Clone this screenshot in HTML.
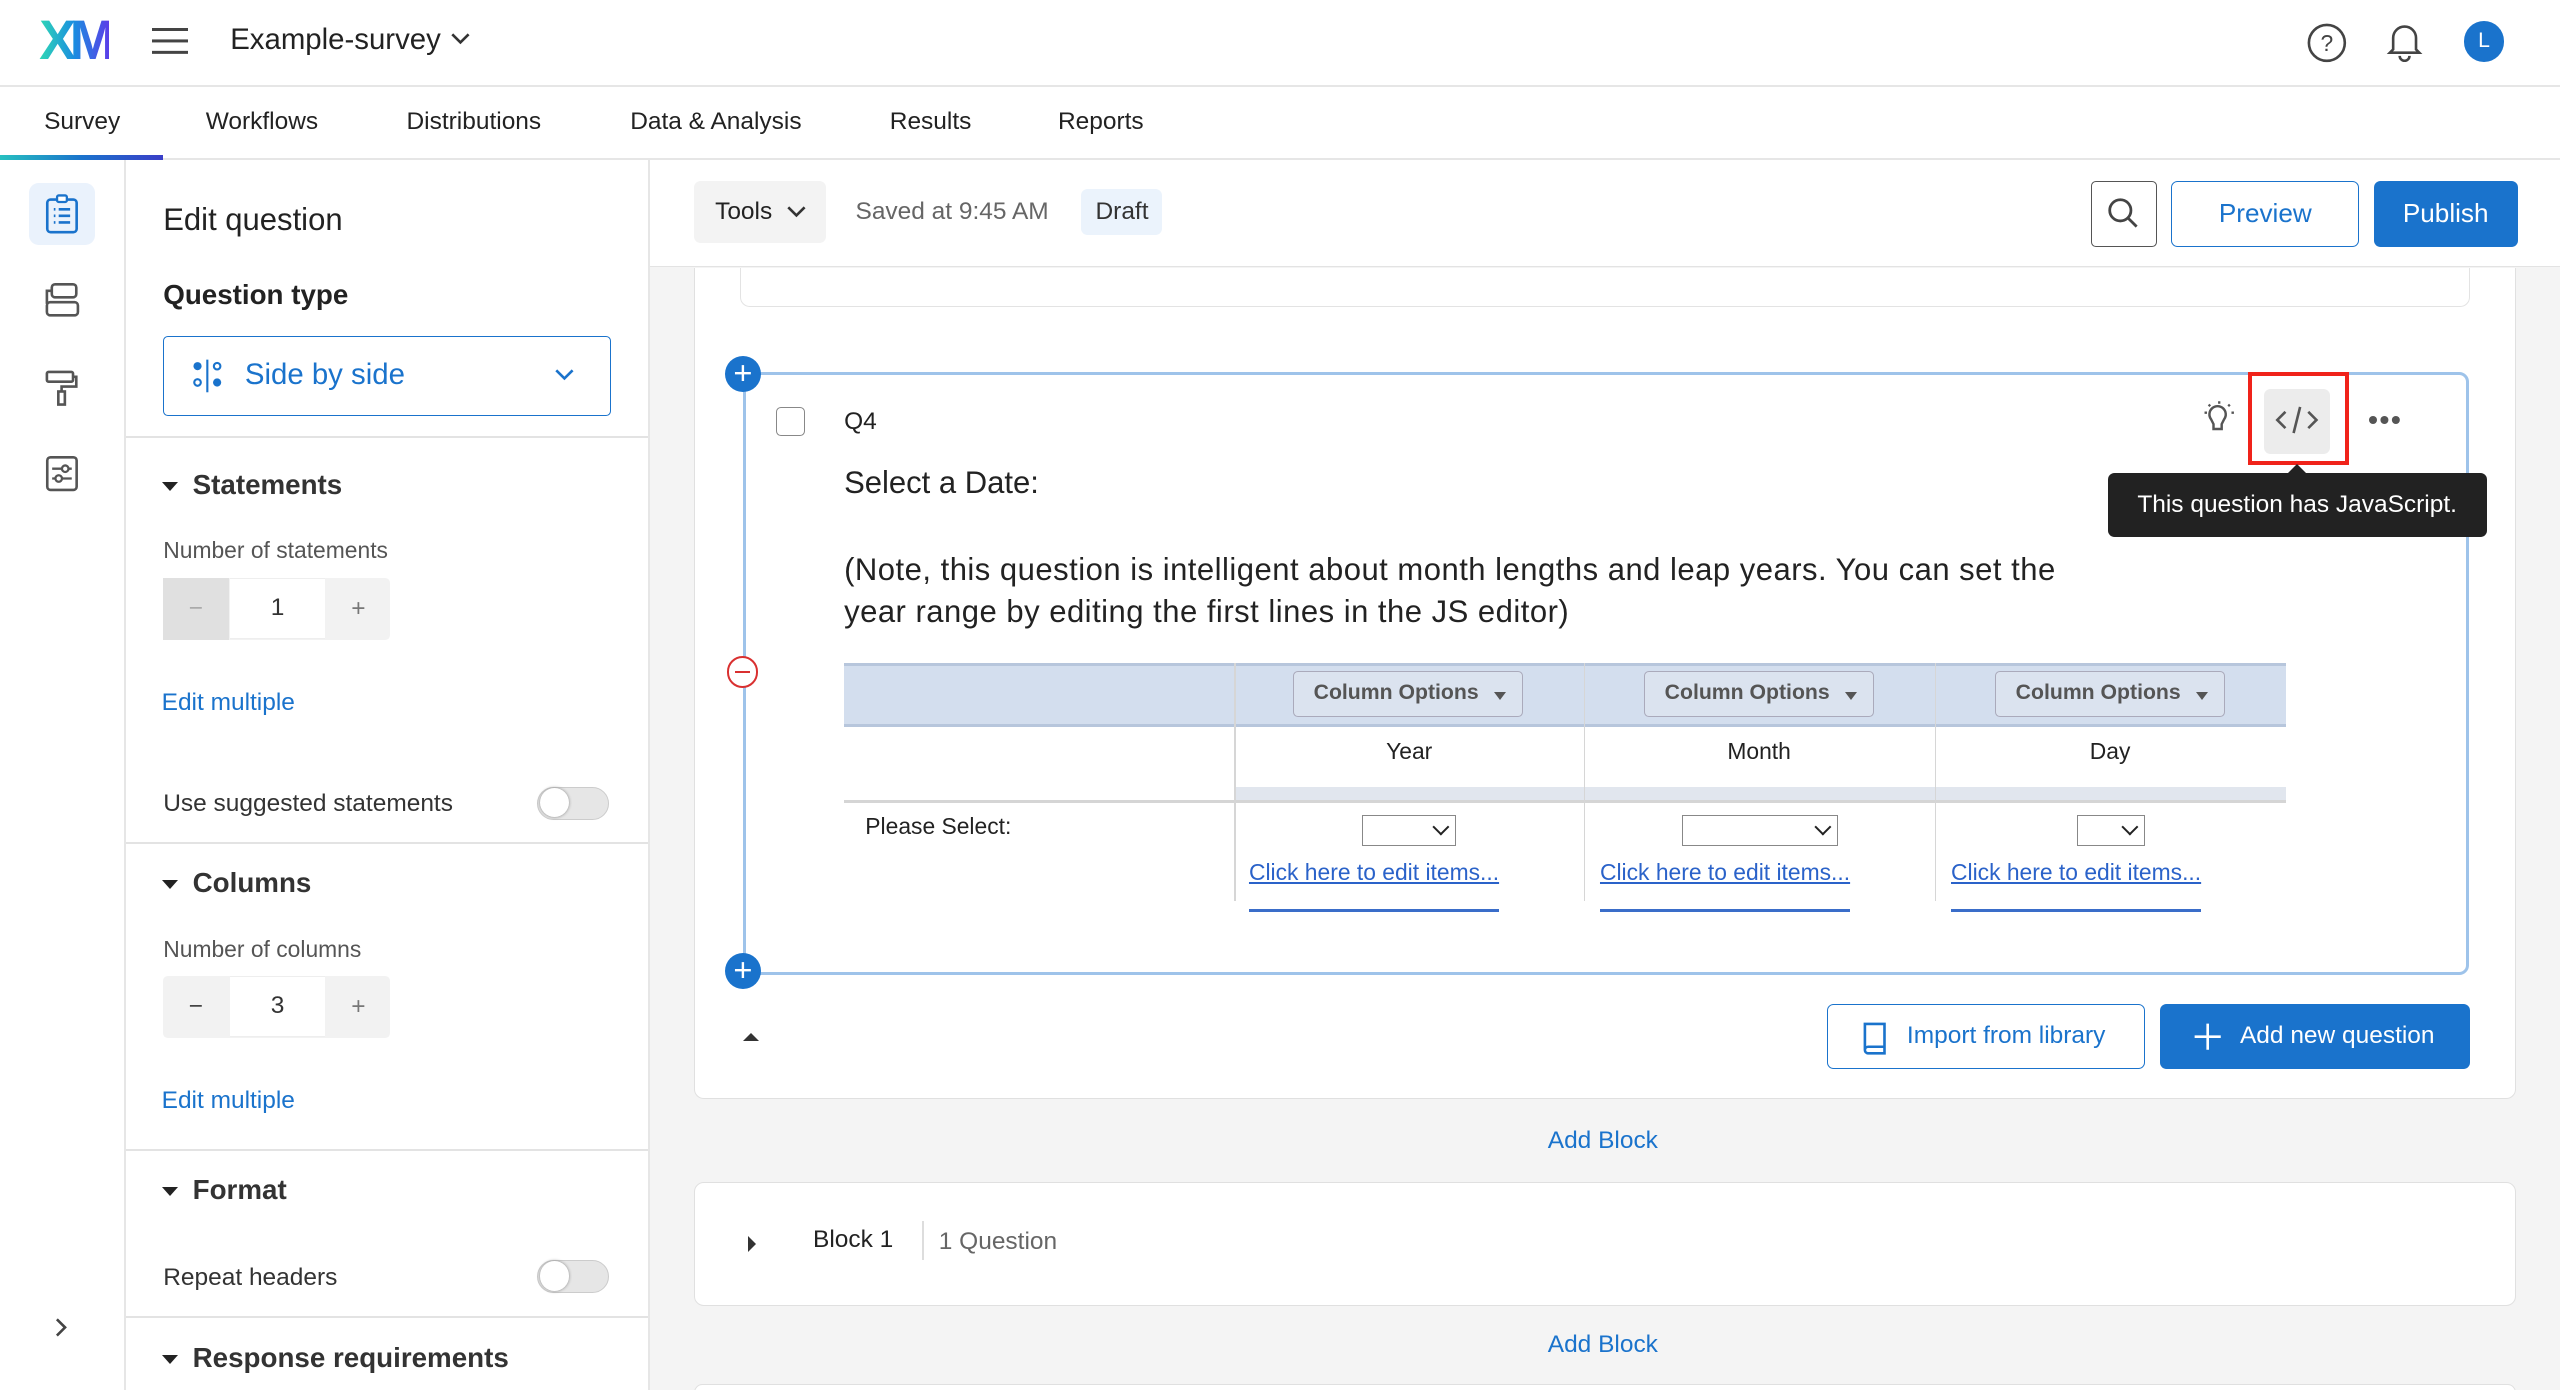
<!DOCTYPE html>
<html><head><meta charset="utf-8"><style>
html,body{margin:0;padding:0;width:2560px;height:1390px;overflow:hidden;background:#fff}
#w{zoom:1.63265;position:relative;width:1568px;height:852px;font-family:"Liberation Sans",sans-serif;color:#222;overflow:hidden}
.a{position:absolute}
.t{position:absolute;white-space:nowrap}
.tab{position:absolute;top:66px;font-size:15px;color:#222}
.sep{position:absolute;left:77px;width:320px;height:1px;background:#e3e3e3}
.h{position:absolute;left:118px;font-size:17px;font-weight:bold;color:#333}
.tri{position:absolute;left:99px;width:0;height:0;border-left:5px solid transparent;border-right:5px solid transparent;border-top:6px solid #222}
.lbl{position:absolute;left:100px;font-size:14px;color:#555}
.link{position:absolute;left:99px;font-size:15px;color:#1a73cc}
.step{position:absolute;left:100px;width:139px;height:38px;background:#f2f2f2;border-radius:3px}
.step div{position:absolute;top:0;height:38px;line-height:38px;text-align:center;font-size:15px;color:#333}
.tog{position:absolute;left:329px;width:44px;height:20px;border-radius:11px;background:#e6e6e6;border:1px solid #ccc;box-sizing:border-box}
.tog:after{content:"";position:absolute;left:1px;top:0px;width:18px;height:18px;border-radius:50%;background:#fff;box-shadow:0 0 2px #888}
.co{position:absolute;top:411px;width:141px;height:28px;border:1px solid #aab;border-radius:3px;background:#dbe3ef;box-sizing:border-box;font-size:13px;font-weight:bold;color:#555;line-height:26px;padding-left:12px}
.co:after{content:"";position:absolute;right:10px;top:12px;border-left:4px solid transparent;border-right:4px solid transparent;border-top:5px solid #555}
.sel{position:absolute;top:499px;height:19px;border:1px solid #888;box-sizing:border-box;background:#fff}
.sel:after{content:"";position:absolute;right:5px;top:3px;width:6px;height:6px;border-right:1.3px solid #222;border-bottom:1.3px solid #222;transform:rotate(45deg)}
.el{position:absolute;top:526px;font-size:14px;color:#2a62c9;text-decoration:underline;border-bottom:2px solid #3a6dc9;padding-bottom:14px}
.circ{position:absolute;width:22px;height:22px;border-radius:50%;background:#1a73cc;color:#fff;text-align:center;line-height:21px;font-size:20px}
</style></head><body><div id="w">
<div class="a" style="left:0;top:52px;width:1568px;height:1px;background:#e6e6e6"></div>
<div class="t" style="left:24px;top:5px;font-size:34px;font-weight:bold;letter-spacing:-4px;background:linear-gradient(90deg,#2fd8b5,#1a8ee0,#5a3ee8);-webkit-background-clip:text;color:transparent">XM</div>
<div class="a" style="left:93px;top:17px;width:22px;height:2px;background:#444;box-shadow:0 7px 0 #444,0 14px 0 #444"></div>
<div class="t" style="left:141px;top:14px;font-size:18px;color:#222">Example-survey</div>
<svg class="a" style="left:275px;top:19px" width="14" height="10"><path d="M2 2l5 5 5-5" fill="none" stroke="#333" stroke-width="1.6"/></svg>
<svg class="a" style="left:1411px;top:12px" width="28" height="28"><circle cx="14" cy="14" r="11" fill="none" stroke="#444" stroke-width="1.6"/><text x="14" y="19" font-size="14" text-anchor="middle" fill="#444" font-family="Liberation Sans">?</text></svg>
<svg class="a" style="left:1461px;top:12px" width="24" height="26"><path d="M5 18V11a7 7 0 0 1 14 0v7l2 2H3z M9 22a3 3 0 0 0 6 0" fill="none" stroke="#444" stroke-width="1.6"/></svg>
<div class="a" style="left:1509px;top:13px;width:25px;height:25px;border-radius:50%;background:#1a73cc;color:#fff;font-size:13px;text-align:center;line-height:25px">L</div>
<div class="tab" style="left:27px">Survey</div>
<div class="tab" style="left:126px">Workflows</div>
<div class="tab" style="left:249px">Distributions</div>
<div class="tab" style="left:386px">Data &amp; Analysis</div>
<div class="tab" style="left:545px">Results</div>
<div class="tab" style="left:648px">Reports</div>
<div class="a" style="left:0;top:97px;width:1568px;height:1px;background:#e6e6e6"></div>
<div class="a" style="left:0;top:95px;width:100px;height:3px;background:linear-gradient(90deg,#27c0c0,#1a73cc,#3a3ec8)"></div>
<div class="a" style="left:76px;top:98px;width:1px;height:754px;background:#e6e6e6"></div>
<div class="a" style="left:18px;top:112px;width:40px;height:38px;border-radius:6px;background:#eaf2fc"></div>
<svg class="a" style="left:27px;top:118px" width="22" height="26"><rect x="2" y="4" width="18" height="20" rx="2" fill="none" stroke="#1a73cc" stroke-width="1.6"/><rect x="8" y="1.5" width="6" height="4" rx="1" fill="#fff" stroke="#1a73cc" stroke-width="1.4"/><path d="M6 10h1M9 10h7M6 14h1M9 14h7M6 18h1M9 18h7" stroke="#1a73cc" stroke-width="1.6"/></svg>
<svg class="a" style="left:26px;top:172px" width="24" height="24"><rect x="6" y="2" width="15" height="8" rx="2" fill="none" stroke="#555" stroke-width="1.6"/><rect x="3" y="13" width="19" height="8" rx="2" fill="none" stroke="#555" stroke-width="1.6"/><path d="M6 6H3v8" fill="none" stroke="#555" stroke-width="1.6"/></svg>
<svg class="a" style="left:26px;top:225px" width="24" height="26"><rect x="3" y="3" width="16" height="6" rx="1" fill="none" stroke="#555" stroke-width="1.6"/><path d="M19 6h2v6h-9v3" fill="none" stroke="#555" stroke-width="1.6"/><rect x="10" y="15" width="4" height="8" fill="none" stroke="#555" stroke-width="1.6"/></svg>
<svg class="a" style="left:27px;top:278px" width="22" height="24"><rect x="2" y="2" width="18" height="20" rx="2" fill="none" stroke="#555" stroke-width="1.6"/><path d="M5 9h12M5 15h12" stroke="#555" stroke-width="1.4"/><circle cx="13" cy="9" r="2" fill="#fff" stroke="#555" stroke-width="1.4"/><circle cx="9" cy="15" r="2" fill="#fff" stroke="#555" stroke-width="1.4"/></svg>
<svg class="a" style="left:32px;top:806px" width="12" height="14"><path d="M3 2l5 5-5 5" fill="none" stroke="#444" stroke-width="1.6"/></svg>
<div class="a" style="left:397px;top:98px;width:1px;height:754px;background:#e6e6e6"></div>
<div class="t" style="left:100px;top:124px;font-size:19px;color:#222">Edit question</div>
<div class="t" style="left:100px;top:171px;font-size:17px;font-weight:bold;color:#222">Question type</div>
<div class="a" style="left:100px;top:206px;width:274px;height:49px;border:1px solid #1a73cc;border-radius:3px;box-sizing:border-box"></div>
<svg class="a" style="left:117px;top:219px" width="22" height="22"><circle cx="4" cy="5" r="2.5" fill="#1a73cc"/><circle cx="4" cy="15" r="2" fill="none" stroke="#1a73cc" stroke-width="1.3"/><path d="M10 1v20" stroke="#1a73cc" stroke-width="1.3"/><circle cx="16" cy="5" r="2" fill="none" stroke="#1a73cc" stroke-width="1.3"/><circle cx="16" cy="15" r="2.5" fill="#1a73cc"/></svg>
<div class="t" style="left:150px;top:219px;font-size:18px;color:#1a73cc">Side by side</div>
<svg class="a" style="left:339px;top:225px" width="14" height="10"><path d="M2 2l5 5 5-5" fill="none" stroke="#1a73cc" stroke-width="1.6"/></svg>
<div class="sep" style="top:267px"></div>
<div class="tri" style="top:295px"></div><div class="h" style="top:287px">Statements</div>
<div class="lbl" style="top:329px">Number of statements</div>
<div class="step" style="top:354px"><div style="left:0;width:40px;background:#e0e0e0;color:#aaa">−</div><div style="left:41px;width:58px;background:#fff;border-top:1px solid #eee;border-bottom:1px solid #eee;height:36px;line-height:36px">1</div><div style="left:100px;width:39px;color:#777">+</div></div>
<div class="link" style="top:422px">Edit multiple</div>
<div class="t" style="left:100px;top:484px;font-size:15px;color:#333">Use suggested statements</div>
<div class="tog" style="top:482px"></div>
<div class="sep" style="top:516px"></div>
<div class="tri" style="top:539px"></div><div class="h" style="top:531px">Columns</div>
<div class="lbl" style="top:573px">Number of columns</div>
<div class="step" style="top:598px"><div style="left:0;width:40px;color:#444">−</div><div style="left:41px;width:58px;background:#fff;border-top:1px solid #eee;border-bottom:1px solid #eee;height:36px;line-height:36px">3</div><div style="left:100px;width:39px;color:#777">+</div></div>
<div class="link" style="top:666px">Edit multiple</div>
<div class="sep" style="top:704px"></div>
<div class="tri" style="top:727px"></div><div class="h" style="top:719px">Format</div>
<div class="t" style="left:100px;top:774px;font-size:15px;color:#333">Repeat headers</div>
<div class="tog" style="top:772px"></div>
<div class="sep" style="top:806px"></div>
<div class="tri" style="top:830px"></div><div class="h" style="top:822px">Response requirements</div>
<div class="a" style="left:398px;top:98px;width:1170px;height:754px;background:#f4f4f4"></div>
<div class="a" style="left:398px;top:98px;width:1170px;height:65px;background:#fff;border-bottom:1px solid #e3e3e3"></div>
<div class="a" style="left:425px;top:111px;width:81px;height:38px;background:#f3f3f3;border-radius:4px"></div>
<div class="t" style="left:438px;top:121px;font-size:15px;color:#222">Tools</div>
<svg class="a" style="left:481px;top:125px" width="14" height="10"><path d="M2 2l5 5 5-5" fill="none" stroke="#333" stroke-width="1.6"/></svg>
<div class="t" style="left:524px;top:121px;font-size:15px;color:#666">Saved at 9:45 AM</div>
<div class="a" style="left:662px;top:116px;width:50px;height:28px;background:#ebf3fc;border-radius:4px"></div>
<div class="t" style="left:671px;top:121px;font-size:15px;color:#333">Draft</div>
<div class="a" style="left:1281px;top:111px;width:40px;height:40px;border:1px solid #555;border-radius:3px;box-sizing:border-box"></div>
<svg class="a" style="left:1289px;top:119px" width="24" height="24"><circle cx="10" cy="10" r="6.5" fill="none" stroke="#444" stroke-width="1.7"/><path d="M15 15l5 5" stroke="#444" stroke-width="1.7"/></svg>
<div class="a" style="left:1330px;top:111px;width:115px;height:40px;border:1px solid #1a73cc;border-radius:4px;box-sizing:border-box;background:#fff;color:#1a73cc;font-size:16px;text-align:center;line-height:38px">Preview</div>
<div class="a" style="left:1454px;top:111px;width:88px;height:40px;border-radius:4px;background:#1a73cc;color:#fff;font-size:16px;text-align:center;line-height:40px">Publish</div>
<div class="a" style="left:425px;top:164px;width:1116px;height:509px;background:#fff;border:1px solid #e0e0e0;border-top:none;border-radius:0 0 6px 6px;box-sizing:border-box"></div>
<div class="a" style="left:453px;top:164px;width:1060px;height:24px;border:1px solid #e3e3e3;border-top:none;border-radius:0 0 6px 6px;box-sizing:border-box"></div>
<div class="a" style="left:455px;top:228px;width:1057px;height:369px;border:2px solid #9ec3ea;border-radius:6px;box-sizing:border-box"></div>
<div class="circ" style="left:444px;top:218px">+</div>
<div class="circ" style="left:444px;top:584px">+</div>
<div class="a" style="left:445px;top:402px;width:17px;height:17px;border:1.6px solid #d93030;border-radius:50%;background:#fff"><div class="a" style="left:4px;top:7.5px;width:9px;height:1.6px;background:#d93030"></div></div>
<div class="a" style="left:475px;top:249px;width:18px;height:18px;border:1px solid #888;border-radius:3px;box-sizing:border-box"></div>
<div class="t" style="left:517px;top:250px;font-size:15px;color:#222">Q4</div>
<svg class="a" style="left:1346px;top:244px" width="26" height="26"><path d="M8 13a5 5 0 1 1 8 0l-1.5 3v3h-5v-3z" fill="none" stroke="#555" stroke-width="1.5"/><path d="M13 2v1.5M4 9h1.5M20.5 9H22M6.5 4l1 1M19.5 4l-1 1" stroke="#555" stroke-width="1.4"/></svg>
<div class="a" style="left:1387px;top:238px;width:40px;height:40px;background:#ececec;border-radius:4px"></div>
<svg class="a" style="left:1393px;top:246px" width="28" height="22"><path d="M7 6l-5 5 5 5M21 6l5 5-5 5M16 3l-4 16" fill="none" stroke="#555" stroke-width="1.6"/></svg>
<div class="a" style="left:1377px;top:228px;width:62px;height:57px;border:3px solid #f0231a;box-sizing:border-box"></div>
<div class="a" style="left:1451px;top:255px;width:5px;height:5px;border-radius:50%;background:#555;box-shadow:7px 0 0 #555,14px 0 0 #555"></div>
<div class="a" style="left:1291px;top:290px;width:232px;height:39px;background:#222;border-radius:4px;color:#fff;font-size:15px;text-align:center;line-height:39px">This question has JavaScript.</div>
<div class="a" style="left:1400px;top:284px;width:0;height:0;border-left:7px solid transparent;border-right:7px solid transparent;border-bottom:7px solid #222"></div>
<div class="t" style="left:517px;top:285px;font-size:19px;color:#222">Select a Date:</div>
<div class="t" style="left:517px;top:336px;font-size:19px;color:#222;line-height:26px;letter-spacing:0.3px">(Note, this question is intelligent about month lengths and leap years. You can set the<br>year range by editing the first lines in the JS editor)</div>
<div class="a" style="left:517px;top:406px;width:883px;height:39px;background:#d3deee;border-top:2px solid #b7c6dc;border-bottom:2px solid #b7c6dc;box-sizing:border-box"></div>
<div class="a" style="left:756px;top:482px;width:644px;height:8px;background:#e1e6ee"></div>
<div class="a" style="left:517px;top:490px;width:883px;height:2px;background:#d5d5d5"></div>
<div class="a" style="left:756px;top:406px;width:1px;height:146px;background:#d6d6d6"></div>
<div class="a" style="left:970px;top:406px;width:1px;height:146px;background:#d6d6d6"></div>
<div class="a" style="left:1185px;top:406px;width:1px;height:146px;background:#d6d6d6"></div>
<div class="co" style="left:792px">Column Options</div>
<div class="co" style="left:1007px">Column Options</div>
<div class="co" style="left:1222px">Column Options</div>
<div class="t" style="left:849px;top:452px;font-size:14px">Year</div>
<div class="t" style="left:1058px;top:452px;font-size:14px">Month</div>
<div class="t" style="left:1280px;top:452px;font-size:14px">Day</div>
<div class="t" style="left:530px;top:498px;font-size:14px">Please Select:</div>
<div class="sel" style="left:834px;width:58px"></div>
<div class="sel" style="left:1030px;width:96px"></div>
<div class="sel" style="left:1272px;width:42px"></div>
<div class="el" style="left:765px">Click here to edit items...</div>
<div class="el" style="left:980px">Click here to edit items...</div>
<div class="el" style="left:1195px">Click here to edit items...</div>
<div class="a" style="left:455px;top:633px;width:0;height:0;border-left:5px solid transparent;border-right:5px solid transparent;border-bottom:5px solid #333"></div>
<div class="a" style="left:1119px;top:615px;width:195px;height:40px;border:1px solid #1a73cc;border-radius:4px;box-sizing:border-box;background:#fff"></div>
<svg class="a" style="left:1139px;top:624px" width="20" height="22"><path d="M3 3h12v14H5a2 2 0 0 0-2 2zM3 19a2 2 0 0 0 2 2h10v-4" fill="none" stroke="#1a73cc" stroke-width="1.6"/></svg>
<div class="t" style="left:1168px;top:626px;font-size:15px;color:#1a73cc">Import from library</div>
<div class="a" style="left:1323px;top:615px;width:190px;height:40px;border-radius:4px;background:#1a73cc"></div>
<svg class="a" style="left:1343px;top:626px" width="18" height="18"><path d="M9 1v16M1 9h16" stroke="#fff" stroke-width="1.6"/></svg>
<div class="t" style="left:1372px;top:626px;font-size:15px;color:#fff">Add new question</div>
<div class="t" style="left:948px;top:690px;font-size:15px;color:#1a73cc">Add Block</div>
<div class="a" style="left:425px;top:724px;width:1116px;height:76px;background:#fff;border:1px solid #e0e0e0;border-radius:6px;box-sizing:border-box"></div>
<div class="a" style="left:458px;top:757px;width:0;height:0;border-top:5px solid transparent;border-bottom:5px solid transparent;border-left:5px solid #333"></div>
<div class="t" style="left:498px;top:751px;font-size:15px;color:#222">Block 1</div>
<div class="a" style="left:565px;top:748px;width:1px;height:24px;background:#ddd"></div>
<div class="t" style="left:575px;top:752px;font-size:15px;color:#666">1 Question</div>
<div class="t" style="left:948px;top:815px;font-size:15px;color:#1a73cc">Add Block</div>
<div class="a" style="left:425px;top:848px;width:1116px;height:10px;background:#fff;border:1px solid #e0e0e0;border-radius:6px;box-sizing:border-box"></div>
</div></body></html>
